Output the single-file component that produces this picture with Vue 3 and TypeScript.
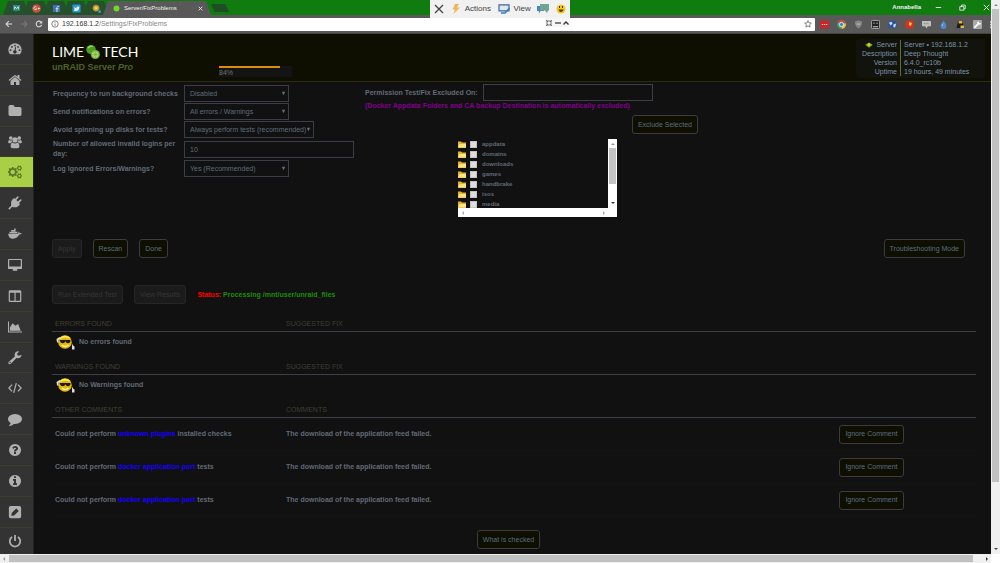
<script setup lang="ts">
import { ref } from 'vue'

interface Icon {
  name: string
  box?: string
  fill?: string
  line?: string
  active?: boolean
}

const dot = (x: number, y: number, r: number) =>
  `M${x - r} ${y}a${r} ${r} 0 1 0 ${2 * r} 0a${r} ${r} 0 1 0 ${-2 * r} 0z`

const gear = (cx: number, cy: number, r: number, teeth: number) => {
  const pts: string[] = []
  for (let i = 0; i < teeth; i++) {
    const step = (Math.PI * 2) / teeth
    const offsets: [number, number][] = [[-0.3, 0.78], [-0.17, 1], [0.17, 1], [0.3, 0.78]]
    for (const [o, k] of offsets) {
      const a = (i + o) * step
      pts.push(`${(cx + Math.cos(a) * r * k).toFixed(2)} ${(cy + Math.sin(a) * r * k).toFixed(2)}`)
    }
  }
  return `M${pts.join('L')}Z`
}

const fa = '0 0 1792 1792'
const disc = 'm640 0q0 209-103 385.5t-279.5 279.5-385.5 103-385.5-103-279.5-279.5-103-385.5 103-385.5 279.5-279.5 385.5-103 385.5 103 279.5 279.5 103 385.5z'

const menu: Icon[] = [
  { name: 'Dashboard', fill: 'M2.2 14A7.6 7.6 0 1 1 13.8 14Z' + dot(2.9, 9.4, 1) + dot(4.5, 5.6, 1) + dot(8, 4, 1) + dot(11.5, 5.6, 1) + dot(13.1, 9.4, 1) + 'M8.2 5.8L9.2 6.1L8.8 9.6A1.9 1.9 0 1 1 7.5 9.4Z' },
  { name: 'Main', box: fa, fill: 'M1472 992v480q0 26-19 45t-45 19h-384v-384h-256v384h-384q-26 0-45-19t-19-45v-480q0-1 .5-3t.5-3l575-474 575 474q1 2 1 6zm223-69l-62 74q-8 9-21 11h-3q-13 0-21-7l-692-577-692 577q-12 8-24 7-13-2-21-11l-62-74q-8-10-7-23.5t11-21.5l719-599q32-26 76-26t76 26l244 204v-195q0-14 9-23t23-9h192q14 0 23 9t9 23v408l219 182q10 8 11 21.5t-7 23.5z' },
  { name: 'Shares', box: fa, fill: 'M1728 608v704q0 92-66 158t-158 66h-1216q-92 0-158-66t-66-158v-960q0-92 66-158t158-66h320q92 0 158 66t66 158v32h672q92 0 158 66t66 158z' },
  { name: 'Users', fill: dot(3.2, 3.4, 2.1) + dot(12.8, 3.4, 2.1) + dot(8, 5.6, 3) + 'M0.2 8.8Q0 5.6 1.6 5.6Q3.2 6.7 4.3 5.9Q4.4 7.5 5 8.2Q3.6 8.3 2.9 9.3H1.2Q.3 9.3 .2 8.8ZM15.8 8.8Q16 5.6 14.4 5.6Q12.8 6.7 11.7 5.9Q11.6 7.5 11 8.2Q12.4 8.3 13.1 9.3H14.8Q15.7 9.3 15.8 8.8ZM3 13.2Q3 9 5.3 8.9Q8 10.6 10.7 8.9Q13 9 13 13.2Q13 15.2 11 15.2H5Q3 15.2 3 13.2Z' },
  { name: 'Settings', active: true, fill: gear(5.4, 8, 5.8, 8) + dot(5.4, 8, 2.6) + gear(13, 3.6, 3.2, 6) + dot(13, 3.6, 1.3) + gear(13, 12.4, 3.2, 6) + dot(13, 12.4, 1.3) },
  { name: 'Plugins', fill: 'M15.6 4.9L12.6 7.9L13.7 9Q11.5 13.2 7.5 12.9Q5.8 13 4.8 12.2L1.6 15.6L.3 14.4L3.6 11.1Q2.4 5.5 7 2.3L8 3.4L11 .4Q12.4 .2 12.2 1.8L9.6 4.7L11.3 6.4L14.2 3.7Q15.7 3.6 15.6 4.9Z' },
  { name: 'Docker', fill: 'M.2 7.6H11.2Q12.4 7.2 11.7 5.2Q13.2 5.8 13.3 7Q14.7 6.6 15.8 7.5Q14.8 8.8 12.8 8.6Q10.7 13.3 5.7 13.3Q.6 13.2 .2 7.6ZM1.7 5.4h9v1.8h-9zM3.7 3.5h5v1.6h-5zM7 1.7h1.7v1.6H7z' },
  { name: 'VMs', fill: 'M1.1 1H14.9Q16 1 16 2.1V11.6Q16 12.7 14.9 12.7H10.3L10.8 14.5H5.2L5.7 12.7H1.1Q0 12.7 0 11.6V2.1Q0 1 1.1 1ZM1.4 2.3V9.8H14.6V2.3Z' },
  { name: 'Apps', fill: 'M2.3 1.4H13.7Q15.2 1.4 15.2 2.9V13.3Q15.2 14.8 13.7 14.8H2.3Q.8 14.8 .8 13.3V2.9Q.8 1.4 2.3 1.4ZM2.2 4.2V13.4H7.4V4.2ZM8.7 4.2V13.4H13.8V4.2Z' },
  { name: 'Stats', fill: 'M0 1.7H1.2V13.2H16V14.4H0ZM2.2 12.3V8.7L5.2 3.7L8.4 6.5L11.6 4.6L14.5 12.3Z' },
  { name: 'Tools', fill: 'M15.6 4.2Q14.8 8.4 10.8 8.3L9.6 7.9L3.6 14.4Q1.9 15.8 .7 14.7Q-.2 13.3 1.3 12L7.8 6.2Q6.7 2.1 10 .6Q11.7 .1 13 .8L10.6 2.5V4.6L12.4 5.5Z' + dot(2.5, 13.2, 0.8) },
  { name: 'Terminal', line: 'M4.7 4.2L1 8L4.7 11.8M11.3 4.2L15 8L11.3 11.8M9.5 2.5L6.5 13.5' },
  { name: 'Feedback', box: fa, fill: 'M1792 896q0 174-120 321.5t-326 233-450 85.5q-70 0-145-8-198 175-460 242-49 14-114 22-17 2-30.5-9t-17.5-29v-1q-3-4-.5-12t2-10 4.5-9.5l6-9 7-8.5 8-9q7-8 31-34.5t34.5-38 31-39.5 32.5-51 27-59 26-76q-157-89-247.5-220t-90.5-281q0-130 71-248.5t191-204.5 286-136.5 348-50.5q244 0 450 85.5t326 233 120 321.5z' },
  { name: 'Help', box: fa, fill: 'M1024 1376v-192q0-14-9-23t-23-9h-192q-14 0-23 9t-9 23v192q0 14 9 23t23 9h192q14 0 23-9t9-23zm256-672q0-88-55.5-163t-138.5-116-170-41q-243 0-371 213-15 24 8 42l132 100q7 6 19 6 16 0 25-12 53-68 86-92 34-24 86-24 48 0 85.5 26t37.5 59q0 38-20 61t-68 45q-63 28-115.5 86.5t-52.5 125.5v36q0 14 9 23t23 9h192q14 0 23-9t9-23q0-19 21.5-49.5t54.5-49.5q32-18 49-28.5t46-35 44.5-48 28-60.5 12.5-81zM1024 896' + disc },
  { name: 'Info', box: fa, fill: 'M1152 1376v-160q0-14-9-23t-23-9h-96v-512q0-14-9-23t-23-9h-320q-14 0-23 9t-9 23v160q0 14 9 23t23 9h96v320h-96q-14 0-23 9t-9 23v160q0 14 9 23t23 9h448q14 0 23-9t9-23zm-128-896v-160q0-14-9-23t-23-9h-192q-14 0-23 9t-9 23v160q0 14 9 23t23 9h192q14 0 23-9t9-23zM1024 896' + disc },
  { name: 'Log', fill: 'M3 1H13Q15 1 15 3V13Q15 15 13 15H3Q1 15 1 13V3Q1 1 3 1ZM3.8 12.4L7.1 12L12.3 6.8L9.4 3.9L4.2 9.1Z' },
  { name: 'Power', line: 'M4.6 3.4A6 6 0 1 0 11.4 3.4M8 1V8' },
]

const freq = ref('Disabled')
const notify = ref('All errors / Warnings')
const spin = ref('Always perform tests (recommended)')
const logins = ref('10')
const logIgnored = ref('Yes (Recommended)')
const excluded = ref('')

const shares = ['appdata', 'domains', 'downloads', 'games', 'handbrake', 'isos', 'media']
const info = [
  ['Server', 'Server • 192.168.1.2'],
  ['Description', 'Deep Thought'],
  ['Version', '6.4.0_rc10b'],
  ['Uptime', '19 hours, 49 minutes'],
]
const clean = [
  { head: 'ERRORS FOUND', text: 'No errors found' },
  { head: 'WARNINGS FOUND', text: 'No Warnings found' },
]
const comments = [
  { link: 'unknown plugins', tail: 'installed checks' },
  { link: 'docker application port', tail: 'tests' },
  { link: 'docker application port', tail: 'tests' },
]
</script>

<template>
  <div class="window">
    <div class="main">
      <header class="chrome">
        <div class="tabs">
          <div class="tab pinned">
            <svg viewBox="0 0 10 10"><path d="M1 1h8v6.500H6L4 9V7.500H1z" fill="#2c8a86" /><path d="M3 6V3l2 2 2-2v3" class="w" /></svg>
          </div>
          <div class="tab pinned">
            <svg viewBox="0 0 10 10"><circle cx="5" cy="5" r="4.800" fill="#c8503a" /><path d="M5 3.500A1.700 1.700 0 1 0 5.300 5.300H4M6.500 5h2.200M7.600 4v2" class="w" /></svg>
          </div>
          <div class="tab pinned">
            <svg viewBox="0 0 10 10"><path d="M1 1h8v8H1z" fill="#3f6fae" /><path d="M5.500 9V4Q5.500 2.500 7.500 2.700M4 5.300h3.200" class="w" /></svg>
          </div>
          <div class="tab pinned">
            <svg viewBox="0 0 10 10"><rect x=".5" y=".5" width="9" height="9" rx="1" fill="#1f9ad6" /><path d="M2 3Q3.500 4.500 5 4.300 5 2.500 6.700 2.700L8.200 3Q8 8 4 7.800 2.500 7.800 2 7.200 3.500 6.500 2 3z" fill="#eee" /></svg>
          </div>
          <div class="tab pinned">
            <svg viewBox="0 0 10 10"><circle cx="4.500" cy="4.500" r="3.500" fill="#d9a637" stroke="#8f8a30" stroke-dasharray="1.500 1" /><circle cx="4.500" cy="4.500" r="1.300" fill="#f6df90" /><circle cx="8.500" cy="8.500" r="1.500" fill="#3d9be0" /></svg>
          </div>
          <div class="tab current">
            <svg viewBox="0 0 10 10"><circle cx="5" cy="5" r="3.300" fill="#6fd82a" /></svg>
            <span class="tab-title">Server/FixProblems</span>
            <svg viewBox="0 0 10 10"><path d="M3 3l4 4M7 3L3 7" class="w" /></svg>
          </div>
          <div class="newtab"></div>
          <div class="user">Annabella</div>
          <div class="controls">
            <svg viewBox="0 0 10 10"><path d="M2 5h6" class="w" /></svg>
            <svg viewBox="0 0 10 10"><path d="M2 4h4.500v4H2zM4 4V2.300h4V6.500H6.500" class="w" /></svg>
            <svg viewBox="0 0 10 10"><path d="M2 2l6 6M8 2L2 8" class="w" /></svg>
          </div>
        </div>
        <div class="toolbar">
          <svg viewBox="0 0 10 10"><path d="M9 5H1.500M4.800 1.500L1.300 5l3.500 3.500" class="t" /></svg>
          <svg viewBox="0 0 10 10" class="dim"><path d="M1 5h7.500M5.200 1.500L8.700 5 5.200 8.500" class="t" /></svg>
          <svg viewBox="0 0 10 10"><path d="M8.300 6A3.500 3.500 0 1 1 7.500 2.500" class="t" /><path d="M9 .8v3.700H5.300z" fill="#ddd" /></svg>
          <div class="omnibox">
            <svg viewBox="0 0 10 10"><circle cx="5" cy="5" r="4" fill="none" stroke="#666" /><path d="M5 4.400v3M5 2.400v1" stroke="#666" /></svg>
            <span class="url">192.168.1.2<i>/Settings/FixProblems</i></span>
            <svg viewBox="0 0 10 10"><path d="M5 .8l1.200 2.800 3 .3-2.200 2 .6 3L5 7.400 2.400 8.900l.6-3-2.200-2 3-.3z" fill="none" stroke="#555" stroke-width=".9" /></svg>
          </div>
          <div class="exts">
            <svg viewBox="0 0 10 10"><rect y=".5" width="10" height="9" rx="1" fill="#c9252b" /><path d="M2 5h1.500M4.300 5h1.500M6.600 5h1.500" class="w" /></svg>
            <svg viewBox="0 0 10 10"><circle cx="5" cy="5" r="4.800" fill="#4aa564" /><path d="M.7 2.800A4.800 4.800 0 0 1 9.500 3.200H5z" fill="#d84b3c" /><path d="M9.500 3.200A4.800 4.800 0 0 1 5 9.800L7 5z" fill="#e8c63c" /><circle cx="5" cy="5" r="2.300" fill="#3f7fd0" stroke="#eee" /></svg>
            <svg viewBox="0 0 10 10"><path d="M5 .5l4 1.300Q9 7.500 5 9.500 1 7.500 1 1.800z" fill="#858585" /><path d="M3 4.500h4" stroke="#ccc" /></svg>
            <svg viewBox="0 0 10 10"><rect x=".5" y=".5" width="9" height="9" rx="1" fill="#222" stroke="#ccc" stroke-width=".8" /><path d="M2 7.500h6M2.500 3.500h1.500M6 3.500h1.500" stroke="#ddd" /></svg>
            <svg viewBox="0 0 10 10"><circle cx="5" cy="5" r="4.500" fill="#2853a8" /><path d="M1 3l3-1 1 2-2 2zM6 5l3-1-1 4-2 0z" fill="#cfe2f5" /></svg>
            <svg viewBox="0 0 10 10"><rect x=".5" y=".5" width="9" height="9" rx="1" fill="#d3301f" /><path d="M5 2l3 2-2 3-2-2z" fill="#f0c33a" /></svg>
            <svg viewBox="0 0 10 10"><path d="M0 1h10v6H6.500L5 9.500 3.500 7H0z" fill="#bdbdbd" /><path d="M2 4h6" stroke="#777" stroke-dasharray="1 1" /></svg>
            <svg viewBox="0 0 10 10"><path d="M5 .5Q8.500 5 8.200 7A3.200 3 0 0 1 1.800 7Q1.500 5 5 .5z" fill="#4f8ac8" /><path d="M3.500 6.500Q3.500 5 4.500 4" stroke="#bcd8f0" fill="none" /></svg>
            <svg viewBox="0 0 10 10"><path d="M2.500 1h5v3l2 5H.5l1-4z" fill="#1c1c1c" /><path d="M3 1h4v3H3zM5 6h4v3H5z" fill="#e0b73a" /></svg>
            <svg viewBox="0 0 10 10"><rect width="10" height="10" rx="1" fill="#a8a8a8" /><path d="M1.500 8.500L6 4M5.500 2L6 4L8.500 4.300" stroke="#fff" stroke-width="1.800" fill="none" /></svg>
            <svg viewBox="0 0 10 10"><path d="M1 1v2M1 4.200v2M1 7.300v2" stroke="#ddd" stroke-width="1.500" /></svg>
          </div>
        </div>
      </header>

      <div class="body">
        <nav class="side">
          <a v-for="m in menu" :key="m.name" href="#" :aria-label="m.name" :class="{ on: m.active }">
            <svg :viewBox="m.box || '0 0 16 16'">
              <path v-if="m.fill" :d="m.fill" fill="currentColor" fill-rule="evenodd" />
              <path v-if="m.line" :d="m.line" fill="none" stroke="currentColor" :stroke-width="m.name === 'Power' ? 2 : 1.4" />
            </svg>
          </a>
        </nav>

        <main class="page">
          <div class="banner">
            <div class="brand">
              <div class="logo">
                <span>LIME</span>
                <svg viewBox="0 0 14 16">
                  <ellipse cx="5" cy="5.500" rx="4.800" ry="4.600" fill="#4e9c22" />
                  <path d="M2 4Q4 1.500 7 2.500" stroke="#9fdc5c" stroke-width="1.300" fill="none" />
                  <circle cx="9.300" cy="10.500" r="4.600" fill="#6fae35" />
                  <circle cx="9.300" cy="10.500" r="3.300" fill="#b4dc78" />
                  <path d="M6 10.500h6.600M9.300 7.200v6.600M7 8.200l4.600 4.600M11.600 8.200L7 12.800" stroke="#6fae35" stroke-width=".6" />
                </svg>
                <span>TECH</span>
              </div>
              <div class="edition">unRAID Server <em>Pro</em></div>
            </div>
            <div class="usage"><div class="bar"></div>84%</div>
            <dl class="info">
              <template v-for="([k, v], i) in info" :key="k">
                <dt>
                  <svg v-if="i === 0" viewBox="0 0 10 8"><path d="M0 3.500L3 2 5 .5 7 2 10 3.500 7.500 5.500 5 7.500 2.500 5.500z" fill="#86a818" /><circle cx="5" cy="3.500" r="1.800" fill="#c4e040" /></svg>{{ k }}
                </dt>
                <dd>{{ v }}</dd>
              </template>
            </dl>
          </div>

          <div class="content">
            <div class="settings">
              <div class="form">
                <label for="freq">Frequency to run background checks</label>
                <span class="pick"><select id="freq" v-model="freq"><option>Disabled</option></select><svg viewBox="0 0 6 6"><path d="M1 1h4L3 5z" /></svg></span>
                <label for="notify">Send notifications on errors?</label>
                <span class="pick"><select id="notify" v-model="notify"><option>All errors / Warnings</option></select><svg viewBox="0 0 6 6"><path d="M1 1h4L3 5z" /></svg></span>
                <label for="spin">Avoid spinning up disks for tests?</label>
                <span class="pick wide"><select id="spin" v-model="spin"><option>Always perform tests (recommended)</option></select><svg viewBox="0 0 6 6"><path d="M1 1h4L3 5z" /></svg></span>
                <label for="logins">Number of allowed invalid logins per day:</label>
                <input id="logins" v-model="logins" class="text" type="text" />
                <label for="logign">Log Ignored Errors/Warnings?</label>
                <span class="pick"><select id="logign" v-model="logIgnored"><option>Yes (Recommended)</option></select><svg viewBox="0 0 6 6"><path d="M1 1h4L3 5z" /></svg></span>
              </div>

              <div class="exclude">
                <div class="excl-line">
                  <label for="excl">Permission Test/Fix Excluded On:</label>
                  <input id="excl" v-model="excluded" class="text" type="text" />
                </div>
                <div class="note">(Docker Appdata Folders and CA backup Destination is automatically excluded)</div>
                <button class="btn excl-btn">Exclude Selected</button>
                <div class="tree">
                  <ul>
                    <li v-for="s in shares" :key="s">
                      <svg viewBox="0 0 8 7"><path d="M0 .5h3l1 1h4V7H0z" fill="#e3b52c" /><path d="M0 6.500L1.500 3H8v3.500z" fill="#fbe58a" /></svg>
                      <label><input type="checkbox" />{{ s }}</label>
                    </li>
                  </ul>
                  <div class="tv">
                    <svg viewBox="0 0 6 6"><path d="M1 4h4L3 2z" fill="#999" /></svg>
                    <i></i>
                    <svg viewBox="0 0 6 6"><path d="M1 2h4L3 4z" fill="#333" /></svg>
                  </div>
                  <div class="th">
                    <svg viewBox="0 0 6 6"><path d="M4 1v4L2 3z" fill="#aaa" /></svg>
                    <svg viewBox="0 0 6 6"><path d="M2 1v4l2-2z" fill="#aaa" /></svg>
                  </div>
                </div>
              </div>
            </div>

            <div class="actions">
              <button class="btn" disabled>Apply</button>
              <button class="btn">Rescan</button>
              <button class="btn">Done</button>
              <button class="btn far">Troubleshooting Mode</button>
            </div>

            <div class="actions second">
              <button class="btn" disabled>Run Extended Test</button>
              <button class="btn" disabled>View Results</button>
              <div class="status"><span>Status:</span> Processing /mnt/user/unraid_files</div>
            </div>

            <table class="results">
              <colgroup><col class="c1" /><col class="c2" /><col class="c3" /></colgroup>
              <tbody v-for="c in clean" :key="c.head">
                <tr><th>{{ c.head }}</th><th colspan="2">SUGGESTED FIX</th></tr>
                <tr class="ok">
                  <td colspan="3">
                    <div class="good">
                      <svg viewBox="0 0 20 16">
                        <circle cx="9.500" cy="8" r="6.800" fill="#e8b800" />
                        <path d="M4.500 4.500Q9 1 14 4" stroke="#ffec60" stroke-width="1.500" fill="none" />
                        <path d="M4 6h11v1.200q-.5 2-2.500 2T10 7.300q-.8 1.900-2.800 1.900T4.500 7.200z" fill="#1c1a10" />
                        <path d="M6.500 11q3 3 6.500 0" stroke="#fff6b8" stroke-width="1.600" fill="none" />
                        <path d="M1 5l3-2 1 1.500-2 1.500v2.500H1.500zM16.500 9.500l1 2 1.500 1v3h-2.500z" fill="#ddd" />
                      </svg>
                      {{ c.text }}
                    </div>
                  </td>
                </tr>
              </tbody>
              <tbody>
                <tr><th>OTHER COMMENTS</th><th colspan="2">COMMENTS</th></tr>
                <tr v-for="(c, i) in comments" :key="i" class="comment">
                  <td>Could not perform <a href="#">{{ c.link }}</a> {{ c.tail }}</td>
                  <td>The download of the application feed failed.</td>
                  <td class="act"><button class="btn">Ignore Comment</button></td>
                </tr>
              </tbody>
            </table>

            <div class="foot"><button class="btn">What is checked</button></div>
          </div>
        </main>
      </div>
    </div>

    <div class="vbar">
      <svg viewBox="0 0 6 6"><path d="M1 4h4L3 2z" fill="#888" /></svg>
      <i></i>
      <svg viewBox="0 0 6 6"><path d="M1 2h4L3 4z" fill="#444" /></svg>
    </div>
    <div class="hbar">
      <svg viewBox="0 0 6 6"><path d="M4 1v4L2 3z" fill="#999" /></svg>
      <i></i>
      <svg viewBox="0 0 6 6"><path d="M2 1v4l2-2z" fill="#333" /></svg>
    </div>
    <div class="corner"></div>

    <div class="remote">
      <div class="remote-top">
        <svg viewBox="0 0 10 10"><path d="M1 1l8 8M9 1L1 9" stroke="#444" stroke-width="1.300" /></svg>
        <span class="cmd"><svg viewBox="0 0 10 10"><path d="M4 0h4L6 3.500h3L2.500 10 4 5.500H1.500z" fill="#f0b45c" /></svg>Actions</span>
        <span class="cmd view"><svg viewBox="0 0 12 10"><path d="M1 .8h10v6H1z" fill="#dbe8f5" stroke="#44658c" stroke-width="1.200" /><path d="M3 9h4l4.500-5" stroke="#3c7cc4" stroke-width="1.600" fill="none" /></svg>View</span>
        <svg class="chat" viewBox="0 0 12 10"><path d="M0 2h7v5H3.500L2 9.500 1.800 7H0z" fill="#4a86bd" /><path d="M3 0h9v6.500h-1L10 9 8 6.500H3z" fill="#6fa595" /></svg>
        <svg viewBox="0 0 10 10"><circle cx="5" cy="5" r="4.500" fill="#f5c71c" /><path d="M2.300 5.500q2.700 5 5.400 0z" fill="#5a3a00" /><path d="M3.500 2v2M6.500 2v2" stroke="#3a2a00" /></svg>
      </div>
      <div class="remote-tail">
        <svg viewBox="0 0 6 6"><path d="M1 1h4v4H1zM0 0l2 2M6 0L4 2M0 6l2-2M6 6L4 4" fill="none" stroke="#555" stroke-width=".8" /></svg>
        <svg viewBox="0 0 6 6"><path d="M0 3h6" stroke="#333" stroke-width="1.200" /></svg>
        <svg viewBox="0 0 6 6"><path d="M.5 4.500L3 2l2.500 2.500" fill="none" stroke="#333" stroke-width="1.300" /></svg>
      </div>
    </div>
  </div>
</template>

<style>
body {
  margin: 0;
  background: #111;
}
</style>

<style scoped>
* {
  box-sizing: border-box;
}
.window {
  position: relative;
  display: grid;
  grid-template-columns: minmax(0, 1fr) 9px;
  grid-template-rows: 1fr 9px;
  min-height: 100vh;
  font: 7px/10px "Liberation Sans", Arial, sans-serif;
  color: #626a77;
  background: #111;
}
svg {
  flex: none;
  display: block;
}
.w {
  fill: none;
  stroke: #e8e8e8;
  stroke-width: 1;
}
.t {
  fill: none;
  stroke: #ddd;
  stroke-width: 1.3;
}
.main {
  display: flex;
  flex-direction: column;
}

/* browser frame */
.tabs {
  display: flex;
  height: 15px;
  padding-left: 3px;
  background: #107c10;
  align-items: flex-end;
}
.tab {
  height: 14px;
  display: flex;
  align-items: center;
  justify-content: center;
  clip-path: polygon(5px 0, calc(100% - 5px) 0, 100% 100%, 0 100%);
}
.tab svg {
  width: 9px;
  height: 9px;
}
.pinned {
  width: 26px;
  margin-right: -6px;
  background: #25502b;
}
.current {
  width: 108px;
  padding: 0 6px 0 9px;
  background: #595959;
  color: #f4f4f4;
  gap: 3px;
}
.tab-title {
  flex: 1;
  font-size: 6px;
}
.newtab {
  width: 18px;
  height: 8px;
  margin-bottom: 3px;
  background: #1f4d25;
  clip-path: polygon(0 0, 80% 0, 100% 100%, 20% 100%);
}
.user {
  margin-left: auto;
  height: 15px;
  line-height: 15px;
  color: #f2f2f2;
  font-weight: bold;
  font-size: 6px;
}
.controls {
  display: flex;
  align-items: center;
  height: 15px;
  gap: 15px;
  padding-left: 13px;
}
.controls svg {
  width: 9px;
  height: 9px;
}
.toolbar {
  display: flex;
  align-items: center;
  gap: 7px;
  height: 19px;
  padding-left: 5px;
  background: #595959;
  border-bottom: 1px solid #444;
}
.toolbar > svg {
  width: 8px;
  height: 8px;
}
.dim {
  opacity: 0.25;
}
.omnibox {
  flex: 1;
  display: flex;
  align-items: center;
  gap: 3px;
  height: 13px;
  padding: 0 3px;
  margin-left: -2px;
  background: #fff;
  color: #333;
  border-radius: 1px;
}
.omnibox svg {
  width: 8px;
  height: 8px;
}
.url {
  flex: 1;
}
.url i {
  font-style: normal;
  color: #888;
}
.exts {
  display: flex;
  gap: 8px;
  width: 171px;
  margin-left: -2px;
  overflow: hidden;
}
.exts svg {
  width: 9px;
  height: 9px;
}

/* left menu */
.body {
  flex: 1;
  display: flex;
}
.side {
  width: 34px;
  display: flex;
  flex-direction: column;
  background: #333;
  border-right: 1px solid #222;
}
.side a {
  flex: 8;
  display: flex;
  align-items: center;
  padding-left: 8px;
  color: #b0b0b0;
  border-bottom: 1px solid #3d3d2b;
}
.side a:last-child {
  flex: 7;
  border: 0;
}
.side svg {
  width: 14px;
  height: 14px;
}
.side a.on {
  background: #a8cf45;
  color: #5a7528;
}

/* banner */
.page {
  flex: 1;
  min-width: 0;
}
.banner {
  display: flex;
  height: 48px;
  padding: 5px 6px 0 18px;
  background: #0e0f00;
  border-bottom: 1px solid #2b2c12;
}
.brand {
  width: 167px;
  padding-top: 4px;
}
.logo {
  display: flex;
  align-items: center;
  gap: 2px;
  height: 18px;
  color: #fff;
  font: 400 14px/18px Lato, sans-serif;
}
.logo svg {
  width: 14px;
  height: 16px;
}
.edition {
  font: bold 9px/12px "Liberation Sans", Arial, sans-serif;
  color: #4f602c;
}
.usage {
  align-self: flex-start;
  width: 73px;
  margin-top: 27px;
  background: #141414;
  color: #6c737b;
  line-height: 9px;
  text-indent: 2px;
}
.bar {
  width: 84%;
  height: 2px;
  background: #d98f0c;
}
.info {
  display: grid;
  grid-template-columns: 45px 84px;
  grid-auto-rows: 9px;
  row-gap: 0;
  align-self: flex-start;
  margin: 0 0 0 auto;
  padding: 1px 0 2px;
  background: #12130c;
  border-radius: 4px;
  color: #7c93aa;
  line-height: 9px;
}
.info dt {
  display: flex;
  justify-content: flex-end;
  align-items: center;
  gap: 3px;
  padding-right: 3px;
  border-right: 1px solid #607030;
}
.info dt svg {
  width: 8px;
  height: 6px;
}
.info dd {
  margin: 0;
  padding-left: 3px;
  white-space: nowrap;
}

/* settings */
.content {
  padding: 2px 15px 4px 18px;
}
.settings {
  display: flex;
  align-items: flex-start;
}
.form {
  display: grid;
  grid-template-columns: 132px 170px;
  align-items: center;
  justify-items: start;
  row-gap: 1px;
  padding-top: 1px;
  font-weight: bold;
}
label {
  font-weight: bold;
}
.form label {
  padding-left: 1px;
}
.pick {
  display: grid;
  align-items: center;
  width: 105px;
}
.pick.wide {
  width: 130px;
}
.pick > * {
  grid-area: 1 / 1;
}
.pick svg {
  width: 5px;
  height: 5px;
  margin-right: 3px;
  justify-self: end;
  fill: #68717c;
  pointer-events: none;
}
select,
.text {
  appearance: none;
  width: 100%;
  height: 17px;
  margin: 0;
  padding: 0 0 0 5px;
  border: 1px solid #3d3d47;
  border-radius: 0;
  background: transparent;
  color: #5f6d7b;
  font: 7px/10px "Liberation Sans", Arial, sans-serif;
}
.exclude {
  display: flex;
  flex-direction: column;
  width: 333px;
  margin-left: 11px;
}
.excl-line {
  display: flex;
  align-items: center;
}
.excl-line label {
  width: 118px;
  white-space: nowrap;
}
.excl-line .text {
  width: 170px;
}
.note {
  color: #80008c;
  font-weight: bold;
  white-space: nowrap;
}
.btn {
  height: 19px;
  margin: 0;
  padding: 0 5px;
  border: 1px solid #3b3b40;
  border-radius: 3px;
  background: #0e0f00;
  color: #5a6e84;
  font: 7px/10px "Liberation Sans", Arial, sans-serif;
  white-space: nowrap;
}
.btn:disabled {
  background: #1b1b1b;
  border-color: #262626;
  color: #363636;
}
.excl-btn {
  align-self: flex-end;
  margin-top: 4px;
}
.tree {
  display: grid;
  grid-template-columns: 150px 9px;
  margin: 5px 0 0 93px;
}
.tree ul {
  height: 69px;
  margin: 0;
  padding: 0;
  list-style: none;
  overflow: hidden;
}
.tree li {
  display: flex;
  align-items: center;
  gap: 4px;
  height: 10px;
  font-size: 6px;
}
.tree li svg {
  width: 8px;
  height: 7px;
}
.tree li label {
  display: flex;
  align-items: center;
  gap: 5px;
}
.tree input {
  appearance: none;
  width: 7px;
  height: 7px;
  margin: 0;
  background: #dedede;
  border: 1px solid #c2c2c2;
}
.tv,
.th {
  display: flex;
  align-items: center;
  justify-content: space-between;
  background: #fff;
}
.tv {
  flex-direction: column;
  padding: 2px 0;
}
.tv i {
  width: 7px;
  height: 36px;
  margin: 1px 0 auto;
  background: #c4c4c4;
}
.tv svg,
.th svg,
.vbar svg,
.hbar svg {
  width: 6px;
  height: 6px;
}
.th {
  grid-column: 1 / -1;
  height: 9px;
  padding: 0 10px 0 2px;
}

/* actions */
.actions {
  display: flex;
  gap: 11px;
  margin-top: 22px;
}
.far {
  margin-left: auto;
  margin-right: 11px;
}
.second {
  margin-top: 27px;
}
.status {
  align-self: center;
  font-weight: bold;
  color: #208c08;
}
.status span {
  color: #ff0000;
}

/* results */
.results {
  width: 100%;
  margin-top: 5px;
  table-layout: fixed;
  border-spacing: 0;
  font-size: 7px;
}
.c1 {
  width: 25%;
}
.c2 {
  width: 60%;
}
.c3 {
  width: 15%;
}
th {
  height: 23px;
  padding: 0 3px 2px;
  vertical-align: bottom;
  text-align: left;
  font-weight: normal;
  color: #403f36;
  border-bottom: 1px solid #3e3e46;
}
td {
  padding: 0 3px;
  font-weight: bold;
}
.ok td {
  height: 20px;
}
.good {
  display: flex;
  align-items: center;
  gap: 3px;
}
.good svg {
  width: 21px;
  height: 16px;
}
.comment td {
  height: 33px;
  border-bottom: 1px solid #13140c;
}
td.act {
  padding: 0 2px;
}
td a {
  color: #1600ff;
  text-decoration: none;
}
.foot {
  display: flex;
  justify-content: center;
  padding: 13px 11px 0 0;
}

/* page scrollbars */
.vbar,
.hbar {
  display: flex;
  align-items: center;
  background: #f0f0f0;
}
.vbar {
  flex-direction: column;
  padding: 2px 0;
}
.vbar i {
  width: 7px;
  height: 86%;
  margin: 1px 0 auto;
  background: #c1c1c1;
}
.hbar {
  padding: 0 1px;
}
.hbar i {
  width: 97.5%;
  height: 7px;
  margin: 0 auto 0 2px;
  background: #c1c1c1;
}
.corner {
  background: #fff;
}

/* remote-session toolbar floating over the browser */
.remote {
  position: absolute;
  top: 0;
  left: 43%;
  width: 140px;
  color: #444;
}
.remote-top {
  display: flex;
  align-items: center;
  justify-content: space-between;
  height: 18px;
  padding: 0 4px;
  background: #f1f1f1;
  font: 8px/18px "Liberation Sans", Arial, sans-serif;
}
.remote-top svg {
  width: 10px;
  height: 10px;
}
.cmd {
  display: flex;
  align-items: center;
  gap: 4px;
}
.remote-top .view svg,
.remote-top .chat {
  width: 12px;
}
.remote-tail {
  display: flex;
  align-items: center;
  justify-content: space-between;
  width: 25px;
  height: 9px;
  margin-left: auto;
  padding: 0 1px;
  background: #f6f6f6;
}
.remote-tail svg {
  width: 6px;
  height: 6px;
}
</style>
